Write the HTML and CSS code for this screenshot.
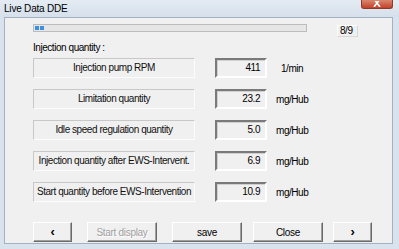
FILE: index.html
```html
<!DOCTYPE html>
<html lang="en">
<head>
<meta charset="utf-8">
<title>Live Data DDE</title>
<link rel="stylesheet" href="styles.css">
</head>
<body>
	<div class="window">
		<div class="titlebar">
			<span class="title">Live Data DDE</span>
			<span class="close_btn">
				<svg width="10" height="6" viewBox="0 0 10 6"><path d="M2 -2 L8 6 M8 -2 L2 6" stroke="#fff" stroke-width="1.6"/></svg>
			</span>
		</div>

		<div class="client">
			<div class="top_row">
				<div class="progress"><span class="chunk"></span><span class="chunk"></span></div>
				<div class="counter">8/9</div>
			</div>

			<p class="group_label">Injection quantity :</p>

			<div class="rows">
				<div class="row">
					<div class="name">Injection pump RPM</div>
					<div class="value">411</div>
					<div class="unit rpm">1/min</div>
				</div>
				<div class="row">
					<div class="name">Limitation quantity</div>
					<div class="value">23.2</div>
					<div class="unit">mg/Hub</div>
				</div>
				<div class="row">
					<div class="name">Idle speed regulation quantity</div>
					<div class="value">5.0</div>
					<div class="unit">mg/Hub</div>
				</div>
				<div class="row">
					<div class="name">Injection quantity after EWS-Intervent.</div>
					<div class="value">6.9</div>
					<div class="unit">mg/Hub</div>
				</div>
				<div class="row">
					<div class="name">Start quantity before EWS-Intervention</div>
					<div class="value">10.9</div>
					<div class="unit">mg/Hub</div>
				</div>
			</div>

			<div class="buttons">
				<button class="btn small">&lsaquo;</button>
				<button class="btn wide gap_l" disabled>Start display</button>
				<button class="btn wide gap_l">save</button>
				<button class="btn wide gap_s">Close</button>
				<button class="btn small gap_s">&rsaquo;</button>
			</div>
		</div>
	</div>
</body>
</html>
```

FILE: styles.css
```css
* {
	box-sizing: border-box;
	font-family: "Liberation Sans", Arial, sans-serif;
}

html, body {
	margin: 0;
	padding: 0;
	width: 399px;
	height: 249px;
	overflow: hidden;
}

body {
	background-color: #d9e3ee;
}

.window {
	display: flex;
	flex-direction: column;
	height: 249px;
}

.titlebar {
	display: flex;
	align-items: flex-start;
	justify-content: space-between;
	height: 17px;
	padding-left: 4px;
	padding-right: 6px;
	background: linear-gradient(#e4ebf3, #d6e0eb);
}

.title {
	font-size: 10px;
	letter-spacing: -0.2px;
	line-height: 12px;
	margin-top: 3px;
	color: #000;
}

.close_btn {
	display: flex;
	justify-content: center;
	align-items: flex-end;
	width: 32px;
	height: 9px;
	background: linear-gradient(#d9866f, #c4402a);
	border: 1px solid #8c3a2a;
	border-top: none;
	border-radius: 0 0 3px 3px;
}

.close_btn svg {
	display: block;
	margin-bottom: 1px;
}

.client {
	margin: 0 6px 5px 4px;
	flex: 1;
	background-color: #f0f0f0;
	border: 1px solid #a3b2c3;
	padding: 6px 0 0 28px;
	font-size: 10px;
	letter-spacing: -0.45px;
	color: #000;
}

.top_row {
	display: flex;
	align-items: flex-start;
	height: 13px;
}

.progress {
	display: flex;
	gap: 1px;
	width: 274px;
	height: 8px;
	padding: 1px;
	background-color: #e6e6e6;
	border: 1px solid #bcbcbc;
}

.chunk {
	width: 4px;
	height: 100%;
	background-color: #3d8fe0;
}

.counter {
	margin-left: 30px;
	margin-top: 1px;
	width: 21px;
	height: 12px;
	line-height: 10px;
	padding-left: 2px;
	border: 1px solid #fdfdfd;
	border-right-color: #d8d8d8;
	border-bottom-color: #d8d8d8;
}

.group_label {
	margin: 5px 0 0 0;
	line-height: 12px;
	height: 16px;
}

.rows {
	display: flex;
	flex-direction: column;
	gap: 11px;
}

.row {
	display: flex;
	align-items: center;
	height: 20px;
}

.name {
	width: 162px;
	height: 20px;
	line-height: 18px;
	text-align: center;
	white-space: nowrap;
	overflow: hidden;
	border: 1px solid #c8c8c8;
	border-right-color: #fcfcfc;
	border-bottom-color: #fcfcfc;
	color: #111;
}

.value {
	margin-left: 20px;
	width: 52px;
	height: 20px;
	line-height: 16px;
	text-align: right;
	padding-right: 5px;
	border: 2px solid #7a7a7a;
	border-right-color: #fff;
	border-bottom-color: #fff;
	box-shadow: inset 1px 1px 0 #d0d0d0;
}

.unit {
	margin-left: 9px;
}

.rpm {
	margin-left: 14px;
}

.buttons {
	display: flex;
	margin-top: 20px;
}

.btn {
	height: 20px;
	padding: 0;
	font-size: 10px;
	letter-spacing: -0.3px;
	color: #000;
	background-color: #f0f0f0;
	border: 1px solid #fff;
	border-right-color: #6a6a6a;
	border-bottom-color: #6a6a6a;
	box-shadow: inset -1px -1px 0 #a0a0a0;
}

.btn:disabled {
	color: #a0a0a0;
	text-shadow: 1px 1px 0 #fff;
}

.small {
	width: 39px;
	font-size: 13px;
	font-weight: bold;
	line-height: 16px;
}

.wide {
	width: 70px;
}

.gap_l {
	margin-left: 15px;
}

.gap_s {
	margin-left: 11px;
}

.gap_s + .gap_s {
	margin-left: 10px;
}
```
